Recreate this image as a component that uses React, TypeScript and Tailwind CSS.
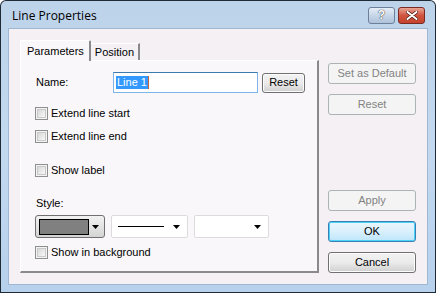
import React from "react";

function Checkbox({ label, className = "" }: { label: string; className?: string }) {
	return (
		<div className={`flex items-center gap-[3px] h-[13px] ${className}`}>
			<div className="w-[13px] h-[13px] border border-[#8e8f8f] bg-[#f4f4f4] p-[1px]">
				<div className="w-full h-full border border-[#c9c9c9] bg-gradient-to-br from-[#d8d8d8] to-[#f8f8f8]" />
			</div>
			<span>{label}</span>
		</div>
	);
}

function SideButton({ label, disabled, active }: { label: string; disabled?: boolean; active?: boolean }) {
	if (disabled) {
		return (
			<div className="h-[21px] w-[88px] rounded-[3px] border border-[#adb2b5] bg-[#f4f4f4] text-[#838383] flex items-center justify-center">
				{label}
			</div>
		);
	}
	return (
		<div
			className={`h-[21px] w-[88px] rounded-[3px] border flex items-center justify-center text-black ${
				active
					? "border-[#3c7fb1] bg-gradient-to-b from-[#eaf6fd] via-[#d9f0fc] to-[#bee6fd] shadow-[inset_0_0_0_1px_#48d2f8]"
					: "border-[#707070] bg-gradient-to-b from-[#f2f2f2] via-[#ebebeb] to-[#cfcfcf] shadow-[inset_0_0_0_1px_#fcfcfc]"
			}`}
		>
			{label}
		</div>
	);
}

function Arrow() {
	return (
		<svg width="7" height="4" viewBox="0 0 7 4">
			<polygon points="0,0 7,0 3.5,4" fill="#000" />
		</svg>
	);
}

export default function App() {
	return (
		<div
			className="w-[436px] h-[293px] bg-[#1e2a36] p-[1px] rounded-t-[6px] overflow-hidden text-[11px] leading-[13px] text-black"
			style={{ fontFamily: "'Liberation Sans', Arial, sans-serif" }}
		>
			<div className="w-full h-full rounded-t-[5px] bg-gradient-to-b from-[#bcd3ea] via-[#c3d9f0] to-[#b7d1ec] flex flex-col px-[7px] pb-[7px]">
				{/* Title bar */}
				<div className="h-[27px] flex items-center justify-between">
					<span className="pl-[4px] pt-[2px] text-[12px]" style={{ fontFamily: "'Open Sans', 'DejaVu Sans', sans-serif" }}>
						Line Properties
					</span>
					<div className="flex gap-[3px] pt-[1px] pr-[3px]">
						<div className="w-[27px] h-[17px] rounded-[3px] border border-[#6d8099] bg-gradient-to-b from-[#e6eef7] via-[#c7d6e8] to-[#aec2da] flex items-center justify-center text-white font-bold text-[12px] leading-none [text-shadow:0_0_1px_#333,0_0_1px_#333]">
							?
						</div>
						<div className="w-[27px] h-[17px] rounded-[3px] border border-[#7a2a22] bg-gradient-to-b from-[#e8a394] via-[#d0543f] to-[#c4432d] flex items-center justify-center">
							<svg width="12" height="9" viewBox="0 0 12 9">
								<path d="M1.5 1 L10.5 8 M10.5 1 L1.5 8" stroke="#4a1b15" strokeWidth="3.4" strokeLinecap="round" />
								<path d="M1.5 1 L10.5 8 M10.5 1 L1.5 8" stroke="#fff" strokeWidth="2" strokeLinecap="round" />
							</svg>
						</div>
					</div>
				</div>

				{/* Client area */}
				<div className="flex-1 bg-[#f4f0f4] border border-[#9fb7d2] flex pl-[11px] pr-[11px] pt-[11px]">
					{/* Tab control */}
					<div className="w-[300px] flex flex-col h-[233px]">
						<div className="flex items-end h-[20px] relative z-10">
							<div className="h-[21px] bg-[#f9f7f9] border-l border-t border-white border-r-2 border-r-[#8a8a8a] rounded-t-[2px] flex items-center -mb-[1px] pl-[6px] pr-[5px]">
								Parameters
							</div>
							<div className="h-[17px] bg-[#f4f0f4] border-t border-white border-r-2 border-r-[#8a8a8a] flex items-center pl-[4px] pr-[4px]">
								Position
							</div>
						</div>
						<div className="flex-1 bg-[#f9f7f9] border-l border-t border-white border-r-2 border-b-2 border-r-[#8a8a8a] border-b-[#8a8a8a] pl-[14px] pt-[11px]">
							{/* Name row */}
							<div className="flex items-center h-[21px]">
								<span className="w-[78px] pl-[1px]">Name:</span>
								<div className="w-[145px] h-[21px] border border-[#7eb4ea] border-t-[#3d7bad] bg-white flex items-center pl-[2px]">
									<span className="bg-[#3399ff] text-white px-[1px] leading-[13px]">Line 1</span>
									<span className="w-[1px] h-[13px] bg-[#c8623c]" />
								</div>
								<div className="ml-[4px] w-[43px] h-[20px] rounded-[3px] border border-[#707070] bg-gradient-to-b from-[#f2f2f2] via-[#ebebeb] to-[#cfcfcf] shadow-[inset_0_0_0_1px_#fcfcfc] flex items-center justify-center">
									Reset
								</div>
							</div>

							<Checkbox label="Extend line start" className="mt-[14px]" />
							<Checkbox label="Extend line end" className="mt-[10px]" />
							<Checkbox label="Show label" className="mt-[21px]" />

							<div className="mt-[20px] pl-[1px]">Style:</div>

							<div className="flex gap-[6px] mt-[5px]">
								<div className="w-[70px] h-[23px] rounded-[3px] border border-[#707070] bg-gradient-to-b from-[#f2f2f2] to-[#d4d4d4] flex items-center pl-[3px] gap-[3px]">
									<div className="w-[50px] h-[16px] bg-[#808080] border border-black" />
									<Arrow />
								</div>
								<div className="w-[77px] h-[23px] rounded-[2px] border border-[#dcdcdc] bg-white flex items-center pl-[6px] pr-[7px] justify-between">
									<div className="w-[46px] h-[1px] bg-black" />
									<Arrow />
								</div>
								<div className="w-[75px] h-[23px] rounded-[2px] border border-[#dcdcdc] bg-white flex items-center justify-end pr-[7px]">
									<Arrow />
								</div>
							</div>

							<Checkbox label="Show in background" className="mt-[8px]" />
						</div>
					</div>

					{/* Side buttons */}
					<div className="ml-[9px] flex flex-col pt-[23px] pb-[11px] gap-[10px]">
						<SideButton label="Set as Default" disabled />
						<SideButton label="Reset" disabled />
						<div className="flex-1" />
						<SideButton label="Apply" disabled />
						<SideButton label="OK" active />
						<SideButton label="Cancel" />
					</div>
				</div>
			</div>
		</div>
	);
}
